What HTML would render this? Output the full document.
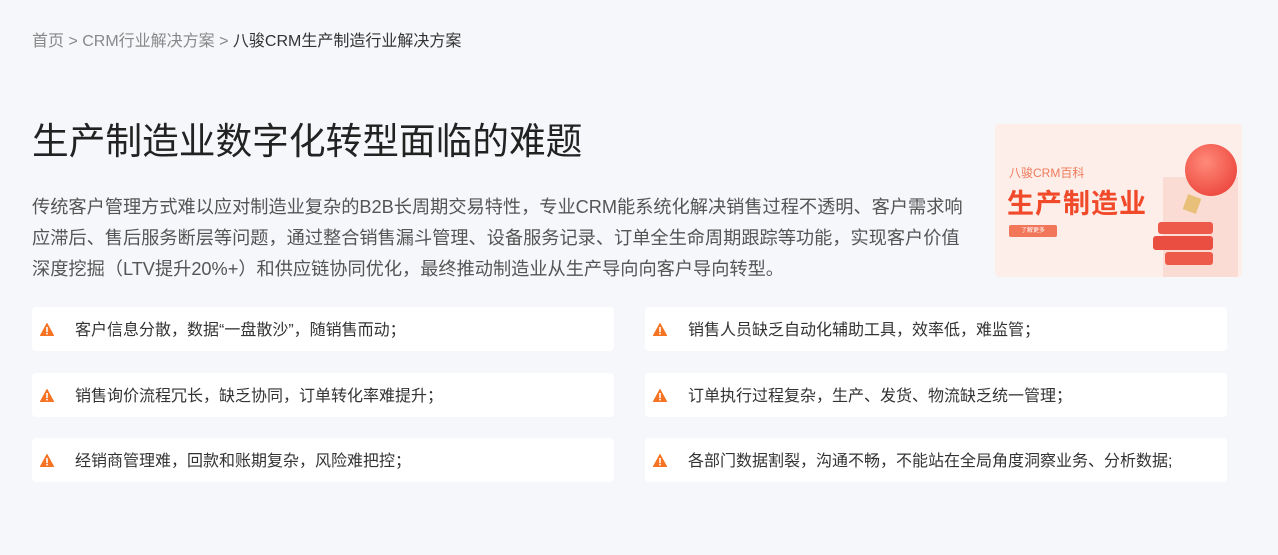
<!DOCTYPE html>
<html><head><meta charset="utf-8"><style>
body{margin:0;width:1278px;height:555px;background:#f5f7fa;font-family:"Liberation Sans","Noto Sans CJK SC",sans-serif;color:#333;position:relative;overflow:hidden}
.bc{position:absolute;left:32px;top:27px;font-size:16px;color:#888}
.bc b{font-weight:normal;color:#333}
h1{position:absolute;left:32px;top:111px;margin:0;font-size:36.7px;font-weight:normal;color:#222}
p{position:absolute;left:32px;top:192px;width:940px;margin:0;font-size:18.2px;line-height:31px;color:#555}
.card{position:absolute;width:582px;height:44px;background:#fff;border-radius:4px;font-size:16px;line-height:48px;color:#333}
.card span{position:absolute;left:43px}
.card svg{position:absolute;left:8px;top:16px}
.ban{position:absolute;left:995px;top:124px;width:247px;height:153px;background:#fdeeea;border-radius:4px;overflow:hidden}
</style></head><body>
<div class="bc">首页 &gt; CRM行业解决方案 &gt; <b>八骏CRM生产制造行业解决方案</b></div>
<h1>生产制造业数字化转型面临的难题</h1>
<p>传统客户管理方式难以应对制造业复杂的B2B长周期交易特性，专业CRM能系统化解决销售过程不透明、客户需求响应滞后、售后服务断层等问题，通过整合销售漏斗管理、设备服务记录、订单全生命周期跟踪等功能，实现客户价值深度挖掘（LTV提升20%+）和供应链协同优化，最终推动制造业从生产导向向客户导向转型。</p>
<div class="ban">
<div style="position:absolute;left:168px;top:53px;width:75px;height:100px;background:#fbdcd4"></div>
<div style="position:absolute;left:14px;top:40px;font-size:12px;color:#f07a5a">八骏CRM百科</div>
<div style="position:absolute;left:12px;top:58px;font-size:27px;font-weight:bold;color:#f04a2a;letter-spacing:1px">生产制造业</div>
<div style="position:absolute;left:14px;top:101px;width:48px;height:12px;background:#f2765a;border-radius:2px;font-size:6px;color:#fff;text-align:center;line-height:12px">了解更多</div>
<div style="position:absolute;left:190px;top:20px;width:52px;height:52px;border-radius:50%;background:radial-gradient(circle at 40% 35%,#ff8a7a,#e8362e)"></div>
<div style="position:absolute;left:190px;top:72px;width:14px;height:16px;background:#e8c07a;transform:rotate(20deg)"></div>
<div style="position:absolute;left:163px;top:98px;width:55px;height:12px;background:#ee5a4a;border-radius:3px"></div>
<div style="position:absolute;left:158px;top:112px;width:60px;height:14px;background:#ea4e40;border-radius:3px"></div>
<div style="position:absolute;left:170px;top:128px;width:48px;height:13px;background:#ee5a4a;border-radius:3px"></div>
</div>
<svg width="0" height="0" style="position:absolute"><defs><symbol id="w" viewBox="0 0 14 13"><path d="M7 0.5L13.6 12.5H0.4Z" fill="#f57322" stroke="#f57322" stroke-linejoin="round"/><rect x="6.2" y="4" width="1.6" height="5" fill="#fff"/><rect x="6.2" y="9.8" width="1.6" height="1.6" fill="#fff"/></symbol></defs></svg>
<div class="card" style="left:32px;top:307px"><svg width="14" height="13"><use href="#w"/></svg><span>客户信息分散，数据“一盘散沙”，随销售而动；</span></div>
<div class="card" style="left:645px;top:307px"><svg width="14" height="13"><use href="#w"/></svg><span>销售人员缺乏自动化辅助工具，效率低，难监管；</span></div>
<div class="card" style="left:32px;top:373px"><svg width="14" height="13"><use href="#w"/></svg><span>销售询价流程冗长，缺乏协同，订单转化率难提升；</span></div>
<div class="card" style="left:645px;top:373px"><svg width="14" height="13"><use href="#w"/></svg><span>订单执行过程复杂，生产、发货、物流缺乏统一管理；</span></div>
<div class="card" style="left:32px;top:438px"><svg width="14" height="13"><use href="#w"/></svg><span>经销商管理难，回款和账期复杂，风险难把控；</span></div>
<div class="card" style="left:645px;top:438px"><svg width="14" height="13"><use href="#w"/></svg><span>各部门数据割裂，沟通不畅，不能站在全局角度洞察业务、分析数据;</span></div>
</body></html>
